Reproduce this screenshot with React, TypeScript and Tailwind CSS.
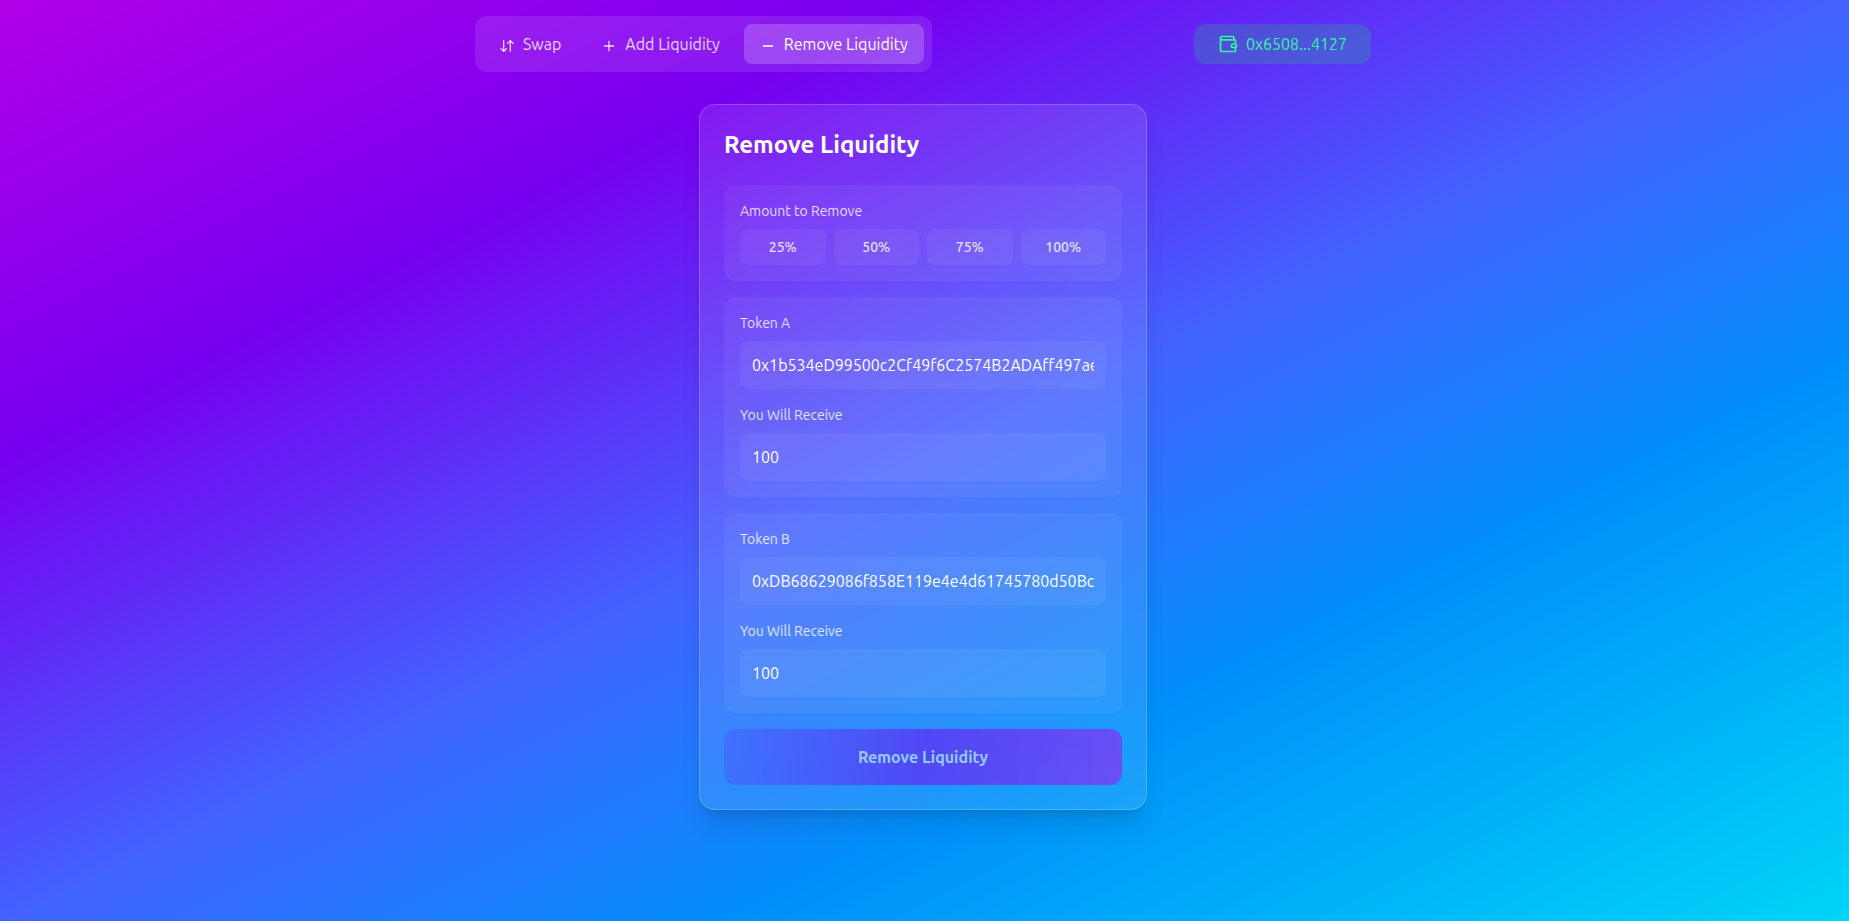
import React, { useId, useState } from "react";
import { ArrowDownUp, Minus, Plus, Wallet } from "lucide-react";
import type { LucideIcon } from "lucide-react";

const tabs: { label: string; icon: LucideIcon }[] = [
  { label: "Swap", icon: ArrowDownUp },
  { label: "Add Liquidity", icon: Plus },
  { label: "Remove Liquidity", icon: Minus },
];

const percentages = [25, 50, 75, 100];

function Field({ label, defaultValue }: { label: string; defaultValue: string }) {
  const id = useId();
  return (
    <div>
      <label htmlFor={id} className="mb-2 block text-sm text-white/80">
        {label}
      </label>
      <input
        id={id}
        type="text"
        defaultValue={defaultValue}
        className="block w-full rounded-lg bg-white/5 p-3 text-base text-white outline-none"
      />
    </div>
  );
}

function TokenPanel({ name, address, amount }: { name: string; address: string; amount: string }) {
  return (
    <section className="flex flex-col gap-4 rounded-xl bg-white/5 p-4">
      <Field label={name} defaultValue={address} />
      <Field label="You Will Receive" defaultValue={amount} />
    </section>
  );
}

export default function App() {
  const [active, setActive] = useState("Remove Liquidity");

  return (
    <div className="min-h-screen bg-[linear-gradient(to_bottom_right,#b100e8,#7700f0_25%,#4361ff_50%,#0090fa_70%,#00d5f7)] py-4 pr-[3px] font-[Ubuntu,'Open_Sans',sans-serif] text-base text-white">
      <header className="mx-auto flex max-w-4xl items-center justify-between">
        <nav className="flex gap-2 rounded-xl bg-white/10 p-2">
          {tabs.map(({ label, icon: Icon }) => (
            <button
              key={label}
              type="button"
              onClick={() => setActive(label)}
              className={
                label === active
                  ? "rounded-lg bg-white/20 px-4 py-2 text-white"
                  : "rounded-lg px-4 py-2 text-white/80"
              }
            >
              <Icon size={16} className="mr-2 inline-block" />
              {label}
            </button>
          ))}
        </nav>
        <button
          type="button"
          className="flex items-center gap-2 rounded-xl bg-[#14e664]/20 px-6 py-2 text-[#34f5a4]"
        >
          <Wallet size={20} />
          0x6508...4127
        </button>
      </header>

      <main className="mx-auto mt-8 max-w-md rounded-2xl border border-white/20 bg-white/10 p-6 shadow-xl">
        <h1 className="mb-6 text-2xl font-semibold">Remove Liquidity</h1>

        <div className="flex flex-col gap-4">
          <section className="rounded-xl bg-white/5 p-4">
            <h2 className="mb-2 text-sm text-white/80">Amount to Remove</h2>
            <div className="grid grid-cols-4 gap-2">
              {percentages.map((value) => (
                <button
                  key={value}
                  type="button"
                  className="rounded-lg bg-white/5 py-2 text-sm font-medium text-white/80"
                >
                  {value}%
                </button>
              ))}
            </div>
          </section>

          <TokenPanel name="Token A" address="0x1b534eD99500c2Cf49f6C2574B2ADAff497ae5dC" amount="100" />
          <TokenPanel name="Token B" address="0xDB68629086f858E119e4e4d61745780d50Bc2f3A" amount="100" />

          <button
            type="button"
            disabled
            className="rounded-xl bg-[linear-gradient(105deg,#4361ff,#7c00f4_50%,#b800f0)] py-4 font-semibold text-white opacity-50"
          >
            Remove Liquidity
          </button>
        </div>
      </main>
    </div>
  );
}
